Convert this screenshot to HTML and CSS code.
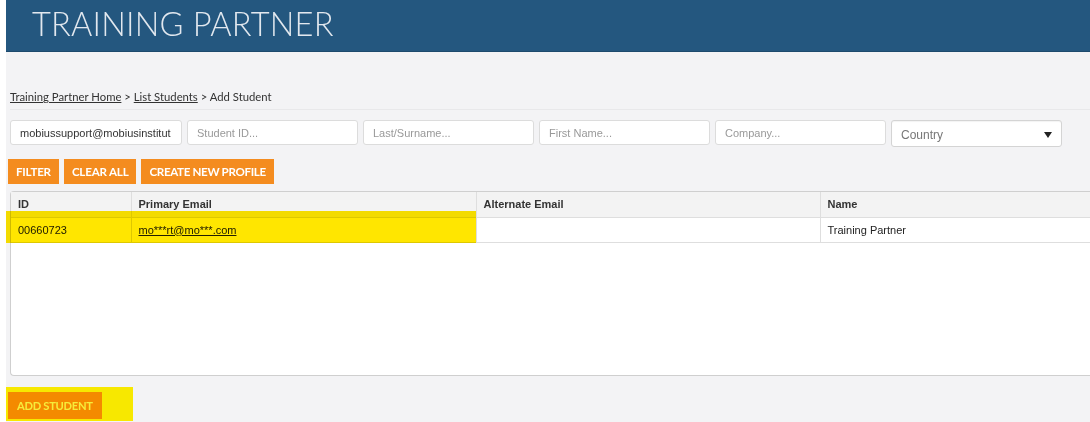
FILE: index.html
```html
<!DOCTYPE html>
<html>
<head>
<meta charset="utf-8">
<link rel="stylesheet" href="styles.css">
</head>
<body>
<div class="page">
  <header class="top">
    <h1 class="title">TRAINING PARTNER</h1>
  </header>
  <div class="content">
    <div class="crumbs">
      <a href="#">Training Partner Home</a> &gt; <a href="#">List Students</a> &gt; Add Student
    </div>
    <div class="filters">
      <input class="field" type="text" value="mobiussupport@mobiusinstitut">
      <input class="field" type="text" placeholder="Student ID...">
      <input class="field" type="text" placeholder="Last/Surname...">
      <input class="field" type="text" placeholder="First Name...">
      <input class="field" type="text" placeholder="Company...">
      <div class="select"><span>Country</span><span class="caret"></span></div>
    </div>
    <div class="actions">
      <button class="btn">FILTER</button>
      <button class="btn">CLEAR ALL</button>
      <button class="btn wide">CREATE NEW PROFILE</button>
    </div>
    <div class="grid-wrap">
      <table class="grid">
        <thead>
          <tr><th class="c1">ID</th><th class="c2">Primary Email</th><th class="c3">Alternate Email</th><th class="c4">Name</th></tr>
        </thead>
        <tbody>
          <tr><td>00660723</td><td><a href="#">mo***rt@mo***.com</a></td><td></td><td>Training Partner</td></tr>
        </tbody>
      </table>
      <div class="mark mark-row"></div>
    </div>
    <div class="footer">
      <div class="mark-box"><button class="btn add">ADD STUDENT</button></div>
    </div>
  </div>
</div>
</body>
</html>
```
FILE: styles.css
```css
html, body { margin: 0; padding: 0; background: #fff; }
body { width: 1090px; height: 422px; overflow: hidden; }
.page { margin-left: 6px; background: #f3f3f5; height: 422px; position: relative; }
.top { height: 52px; background: #24577f; border-bottom: 1px solid #1d4a6d; box-sizing: border-box; }
.title { margin: 0; padding: 4px 0 0 26px; font-family: Lato, sans-serif; font-weight: 300; font-size: 32.6px; color: #e2e8ef; letter-spacing: 0.2px; line-height: 40px; }
.content { padding: 0 0 0 4px; }
.crumbs { font-family: Lato, sans-serif; font-size: 11.3px; color: #333; padding-top: 37px; height: 20px; line-height: 16px; border-bottom: 1px solid #e8e8ea; }
.crumbs a { color: #333; text-decoration: underline; }
.filters { display: flex; gap: 5px; margin-top: 10px; align-items: flex-start; }
.field { width: 172px; height: 25px; box-sizing: border-box; border: 1px solid #dcdcdc; border-radius: 3px; background: #fff; font-family: "Liberation Sans", Arial, sans-serif; font-size: 11px; color: #333; padding: 0 9px; margin: 0; outline: none; }
.field:nth-child(2), .field:nth-child(3), .field:nth-child(4), .field:nth-child(5) { width: 171px; }
.field::placeholder { color: #999; }
.select { width: 171px; height: 27px; box-sizing: border-box; border: 1px solid #d4d4d4; border-radius: 3px; background: #fff; display: flex; align-items: center; justify-content: space-between; padding: 2px 9px 0 9px; font-family: "Liberation Sans", Arial, sans-serif; font-size: 12px; color: #777; box-shadow: inset 0 1px 1px rgba(0,0,0,0.05); }
.caret { width: 0; height: 0; border-left: 4px solid transparent; border-right: 4px solid transparent; border-top: 6px solid #222; }
.actions { display: flex; gap: 5px; margin-top: 12px; margin-left: -2px; }
.btn { height: 25px; border: none; background: #f48c1f; color: #fff; font-family: Lato, sans-serif; font-weight: 700; font-size: 11.6px; padding: 0 8px; margin: 0; letter-spacing: -0.2px; cursor: pointer; }
.btn.wide { letter-spacing: -0.35px; }
.grid-wrap { position: relative; margin-top: 7px; height: 185px; background: #fff; border: 1px solid #cfcfcf; border-right: none; border-radius: 4px 0 0 4px; box-sizing: border-box; }
.grid { border-collapse: collapse; width: 1081px; font-family: "Liberation Sans", Arial, sans-serif; font-size: 11px; color: #222; }
.grid th, .grid td { height: 25px; padding: 0 0 0 7px; text-align: left; border-left: 1px solid #dedede; border-bottom: 1px solid #dedede; box-sizing: border-box; }
.grid th:first-child, .grid td:first-child { border-left: none; }
.grid th { background: #f3f3f3; font-weight: bold; color: #333; }
.grid td a { color: #222; text-decoration: underline; }
.c1 { width: 120px; }
.c2 { width: 345px; }
.c3 { width: 344px; }
.c4 { width: auto; }
.mark { position: absolute; background: #ffe600; mix-blend-mode: multiply; }
.mark-row { left: -5px; top: 19px; width: 470px; height: 32px; }
.footer { margin-top: 11px; margin-left: -4px; }
.mark-box { display: inline-flex; background: #f7e800; padding: 5px 31px 2px 2px; }
.add { background: #f48a00; color: #f6ec3a; height: 27px; font-size: 11.2px; letter-spacing: -0.3px; padding: 0 9px; }
```
